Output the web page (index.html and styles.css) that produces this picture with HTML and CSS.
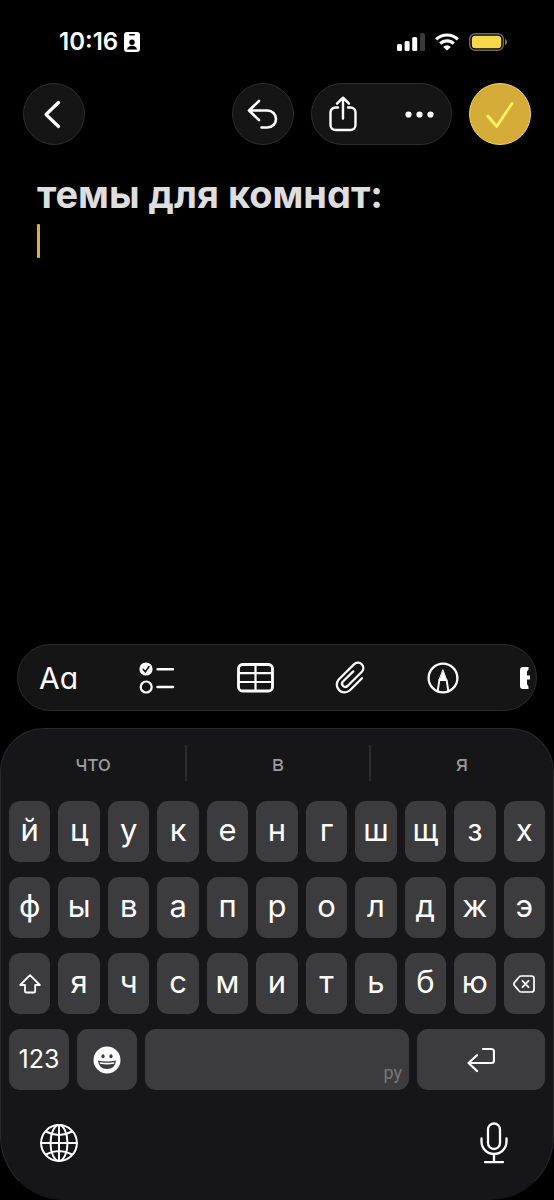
FILE: index.html
```html
<!DOCTYPE html>
<html lang="ru">
<head>
<meta charset="utf-8">
<meta name="viewport" content="width=device-width, initial-scale=1">
<title>Заметки</title>
<link rel="stylesheet" href="styles.css">
</head>
<body>
<div class="screen">
  <div class="status">
    <div class="status-side">
      <span class="time">10:16</span>
      <svg width="16" height="20" viewBox="0 0 16 20" aria-hidden="true"><rect width="16" height="20" rx="3" fill="#fff"/><rect x="5" y="2" width="6" height="1.6" rx=".8" fill="#000"/><circle cx="8" cy="10.2" r="2.7" fill="#000"/><path d="M3 17.5c.4-2.7 2.4-3.8 5-3.8s4.600 1.100 5 3.800z" fill="#000"/></svg>
    </div>
    <div class="status-side status-right">
      <svg width="28" height="18" viewBox="0 0 28 18" fill="#fff" aria-hidden="true"><rect y="11" width="5" height="7" rx="1.500"/><rect x="7.600" y="8" width="5" height="10" rx="1.500"/><rect x="15.200" y="4" width="5" height="14" rx="1.500"/><rect x="23" width="5" height="18" rx="1.500" fill="#3a3a3a"/></svg>
      <svg width="24" height="18" viewBox="0 0 24 18" fill="none" stroke="#fff" stroke-width="3.200" aria-hidden="true"><path d="M1.200 6.400a15.400 15.400 0 0 1 21.600 0M5.300 10.700a9.500 9.500 0 0 1 13.400 0"/><path d="M12 17.600 8.200 13.900a5.400 5.400 0 0 1 7.600 0z" fill="#fff" stroke="none"/></svg>
      <svg width="38" height="18" viewBox="0 0 38 18" aria-hidden="true"><rect x=".7" y=".7" width="33.600" height="16.600" rx="5.500" fill="none" stroke="#6f6a62" stroke-width="1.400"/><rect x="2.800" y="2.800" width="29.400" height="12.400" rx="3.500" fill="#f8d84a"/><path d="M36 6v6c1.300-.6 2-1.700 2-3s-.7-2.400-2-3z" fill="#8a7a3a"/></svg>
    </div>
  </div>

  <header class="nav">
    <button class="round" aria-label="Назад"><svg width="60" height="60" viewBox="1 1 60 60"><path d="M35.500 19.500 23 31.500l12.500 12" stroke-width="3.200"/></svg></button>
    <div class="nav-actions">
      <button class="round" aria-label="Отменить"><svg width="60" height="60" viewBox="1 1 60 60"><path d="M27 18 17 27.500 27 37M17 27.500h18.500a8.500 8.500 0 0 1 0 17h-6" stroke-width="2.600"/></svg></button>
      <div class="pill">
        <button class="plain" aria-label="Поделиться"><svg width="28" height="36" viewBox="0 0 28 36"><path d="M9 11.500H6.500a5 5 0 0 0-5 5V29a5 5 0 0 0 5 5h15a5 5 0 0 0 5-5V16.500a5 5 0 0 0-5-5H19M14 22.500V2M8 7.700l6-6 6 6" stroke-width="2.400"/></svg></button>
        <button class="plain" aria-label="Ещё"><svg width="29" height="7" viewBox="0 0 29 7"><g fill="#fff" stroke="none"><circle cx="3.500" cy="3.500" r="3.100"/><circle cx="14.500" cy="3.500" r="3.100"/><circle cx="25.500" cy="3.500" r="3.100"/></g></svg></button>
      </div>
      <button class="round done" aria-label="Готово"><svg width="60" height="60" viewBox="1 1 60 60"><path d="m18.800 33 8.900 10.500L43 20.500" stroke-width="2.800"/></svg></button>
    </div>
  </header>

  <main class="note">
    <h1 class="note-title">темы для комнат:</h1>
    <p class="note-line"><span class="caret"></span></p>
  </main>

  <div class="tools">
    <button class="plain format" aria-label="Формат">Aa</button>
    <button class="plain" aria-label="Список"><svg width="36" height="32" viewBox="0 0 36 32"><circle cx="7" cy="7" r="6.600" fill="#fff" stroke="none"/><path d="m4.200 7.300 2.200 2.600 3.600-5.400" stroke="#151515" stroke-width="1.600"/><circle cx="7.200" cy="25" r="5.500" stroke-width="2.200"/><path d="M18.500 7.200h15.500M18.500 25h15.500" stroke-width="2.400"/></svg></button>
    <button class="plain" aria-label="Таблица"><svg width="37" height="30" viewBox="0 0 37 30"><rect x="1.500" y="1.500" width="34" height="26.500" rx="4" stroke-width="2.800"/><path d="M18.500 2v26M2 10.200h33M2 19h33" stroke-width="2.200"/></svg></button>
    <button class="plain" aria-label="Вложение"><svg width="30" height="34" viewBox="0 0 30 34"><path d="M27 17.200 14.700 29.500A7.800 7.800 0 0 1 3.700 18.500L19.500 2.900A5.400 5.400 0 0 1 27.100 10.500L12.300 25.300A3.300 3.300 0 0 1 7.700 20.700L18.300 10.400" stroke-width="2.300"/></svg></button>
    <button class="plain" aria-label="Разметка"><svg width="32" height="32" viewBox="0 0 32 32"><circle cx="16" cy="16" r="14.400" stroke-width="2.300"/><path d="m16 8 3.800 10.500h-7.600z" fill="#fff" stroke-width="1"/><path d="M12.400 18 10.700 29M19.600 18l1.700 11" stroke-width="1.900"/></svg></button>
    <button class="plain" aria-label="Дополнительно"><svg width="12" height="24" viewBox="0 0 12 24"><path d="M3 1h5.500v2.500L7 5.500v4h3v4H7V18l1.500 2.500V23H3q-3 0-3-3V4q0-3 3-3z" fill="#fff" stroke="none"/></svg></button>
  </div>

  <section class="keyboard" aria-label="Клавиатура">
    <div class="suggestions">
      <button class="suggestion">что</button>
      <button class="suggestion">в</button>
      <button class="suggestion">я</button>
    </div>
    <div class="keys">
      <div class="row">
        <button class="key">й</button><button class="key">ц</button><button class="key">у</button><button class="key">к</button><button class="key">е</button><button class="key">н</button><button class="key">г</button><button class="key">ш</button><button class="key">щ</button><button class="key">з</button><button class="key">х</button>
      </div>
      <div class="row">
        <button class="key">ф</button><button class="key">ы</button><button class="key">в</button><button class="key">а</button><button class="key">п</button><button class="key">р</button><button class="key">о</button><button class="key">л</button><button class="key">д</button><button class="key">ж</button><button class="key">э</button>
      </div>
      <div class="row">
        <button class="key key-icon" aria-label="Shift"><svg width="22" height="20" viewBox="0 0 22 20"><path d="M11 1.200 20.800 11h-4.600v6.200q0 1.300-1.300 1.300H7.300Q6 18.500 6 17.200V11H1.200z" stroke-width="1.800"/></svg></button><button class="key">я</button><button class="key">ч</button><button class="key">с</button><button class="key">м</button><button class="key">и</button><button class="key">т</button><button class="key">ь</button><button class="key">б</button><button class="key">ю</button><button class="key key-icon" aria-label="Удалить"><svg width="22" height="18" viewBox="0 0 22 18"><path d="M8.200 1H18.500Q21 1 21 3.500v11q0 2.500-2.500 2.500H8.200Q7 17 6.300 16.200L1.400 10.400Q.4 9 1.400 7.600L6.300 1.800Q7 1 8.200 1zM9.500 5.800l6 6.400M15.500 5.800l-6 6.400" stroke-width="1.700"/></svg></button>
      </div>
      <div class="row row-bottom">
        <button class="key key-num">123</button>
        <button class="key key-icon" aria-label="Эмодзи"><svg width="28" height="28" viewBox="0 0 28 28"><circle cx="14" cy="14" r="13.500" fill="#fff" stroke="none"/><g fill="#3c3c3e" stroke="none"><ellipse cx="10" cy="10.300" rx="1.600" ry="2"/><ellipse cx="18" cy="10.300" rx="1.600" ry="2"/><path d="M5 14.600q9 1.800 18 0Q22.300 23 14 23T5 14.600z"/></g><path d="M7.400 17q6.600 1.300 13.200 0" stroke-width="1.600"/></svg></button>
        <button class="key key-space" aria-label="Пробел"><span class="lang">ру</span></button>
        <button class="key key-icon" aria-label="Ввод"><svg width="28" height="26" viewBox="0 0 28 26"><path d="M16 2h8.500Q27 2 27 4.500v9.200Q27 16 24.500 16H1.500M10 8.200 1.500 16l8.500 8" stroke-width="2.200"/></svg></button>
      </div>
    </div>
    <div class="dock">
      <button class="plain" aria-label="Сменить язык"><svg width="38" height="38" viewBox="0 0 38 38" stroke-width="2"><circle cx="19" cy="19" r="17.900"/><ellipse cx="19" cy="19" rx="8.500" ry="17.900"/><path d="M19 1v36M1 19h36M5.800 7.500Q19 14.500 32.200 7.500M5.800 30.500Q19 23.500 32.200 30.500"/></svg></button>
      <button class="plain" aria-label="Диктовка"><svg width="28" height="42" viewBox="0 0 28 42"><rect x="8" y="1.500" width="12" height="25.500" rx="6" stroke-width="2.300"/><path d="M1.500 16.500v3a12.500 12.500 0 0 0 25 0v-3M14 32.500V40M5 40.200h18" stroke-width="2.300"/></svg></button>
    </div>
  </section>
</div>
</body>
</html>
```
FILE: styles.css
```css
* {
  box-sizing: border-box;
}

body {
  margin: 0;
  background: #000;
  color: #fff;
  font-family: Inter, "Liberation Sans", sans-serif;
}

.screen {
  display: flex;
  flex-direction: column;
  min-height: 100vh;
}

button {
  margin: 0;
  padding: 0;
  border: 0;
  background: none;
  color: inherit;
  font: inherit;
}

svg {
  display: block;
  flex: none;
}

button svg {
  fill: none;
  stroke: #fff;
  stroke-linecap: round;
  stroke-linejoin: round;
}

.status {
  display: flex;
  justify-content: space-between;
  align-items: center;
  height: 83px;
  padding: 0 47px 0 59px;
}

.status-side {
  display: flex;
  align-items: center;
  gap: 6px;
}

.status-right {
  gap: 10px;
}

.time {
  font-size: 24px;
  font-weight: 600;
}

.nav {
  display: flex;
  justify-content: space-between;
  padding: 0 23px;
}

.nav-actions {
  display: flex;
  gap: 17px;
}

.round,
.pill {
  height: 62px;
  border: 1px solid #2c2c2c;
  border-radius: 31px;
  background: #151515;
}

.round {
  width: 62px;
}

.done {
  border-color: #f3d548;
  background: #d5ac39;
}

.done svg {
  stroke: #fdf45c;
}

.pill {
  display: flex;
  align-items: center;
  justify-content: space-between;
  width: 141px;
  padding: 0 17px;
}

.note {
  flex: 1;
  padding: 26px 37px;
}

.note-title {
  margin: 0;
  color: #dedede;
  font-size: 38px;
  font-weight: 700;
  line-height: 46px;
  font-feature-settings: "cv11";
}

.note-line {
  margin: 7px 0 0;
}

.caret {
  display: block;
  width: 3px;
  height: 34px;
  border-radius: 1px;
  background: #d9b13c;
}

.tools {
  display: flex;
  align-items: center;
  justify-content: space-between;
  height: 67px;
  margin: 0 17px 17px;
  padding: 0 4px 0 21px;
  border: 1px solid #2c2c2c;
  border-radius: 34px;
  background: #151515;
}

.format {
  font-size: 30px;
  font-feature-settings: "cv11";
}

.keyboard {
  padding: 16px 8px 35px;
  border: 1px solid #29292b;
  border-bottom-color: #161618;
  border-radius: 44px 44px 64px 64px;
  background: #161618;
}

.suggestions {
  display: grid;
  grid-template-columns: repeat(3, 1fr);
  margin: 0 -8px;
}

.suggestion {
  height: 36px;
  color: #9b9b9d;
  font-size: 22px;
}

.suggestion + .suggestion {
  border-left: 2px solid #2b2b2d;
}

.keys {
  display: grid;
  gap: 15px;
  margin-top: 20px;
}

.row {
  display: grid;
  grid-template-columns: repeat(11, 1fr);
  gap: 8px;
}

.row-bottom {
  grid-template-columns: 60fr 60fr 264fr 128fr;
}

.key {
  display: flex;
  align-items: center;
  justify-content: center;
  min-width: 0;
  height: 61px;
  padding-bottom: 4px;
  border-radius: 11px;
  background: #3c3c3e;
  font-size: 31px;
}

.key-icon {
  padding-bottom: 0;
}

.key-num {
  padding-bottom: 2px;
  font-size: 25px;
}

.key-space {
  align-items: flex-end;
  justify-content: flex-end;
  padding: 7px;
}

.lang {
  color: #77777a;
  font-family: "Liberation Sans Narrow", Roboto, sans-serif;
  font-size: 18px;
  line-height: 20px;
}

.dock {
  display: flex;
  align-items: center;
  justify-content: space-between;
  margin-top: 32px;
  padding: 0 37px 0 31px;
}
```
